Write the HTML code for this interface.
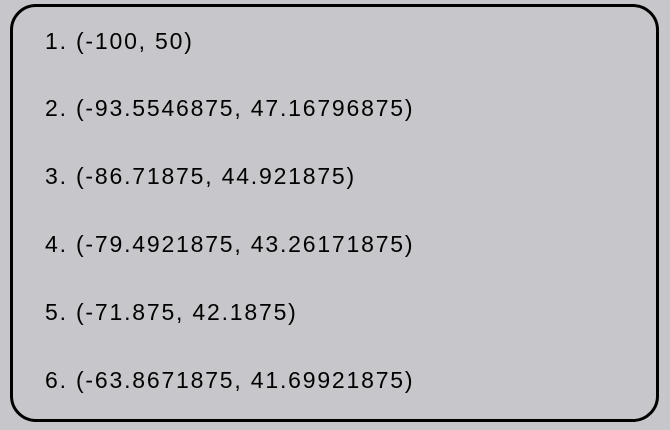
<!DOCTYPE html>
<html><head><style>
html,body{margin:0;padding:0;background:#c7c7cb;width:670px;height:430px;overflow:hidden}
.box{position:absolute;left:10px;top:4px;width:643px;height:412px;border:3px solid #000;border-radius:26px}
.l{position:absolute;left:45px;font:23px "Liberation Sans",sans-serif;letter-spacing:1.8px;color:#000;line-height:26px;white-space:nowrap}
</style></head><body>
<div class="box"></div>
<div class="l" style="top:28px">1. (-100, 50)</div>
<div class="l" style="top:95px">2. (-93.5546875, 47.16796875)</div>
<div class="l" style="top:163px">3. (-86.71875, 44.921875)</div>
<div class="l" style="top:231px">4. (-79.4921875, 43.26171875)</div>
<div class="l" style="top:299px">5. (-71.875, 42.1875)</div>
<div class="l" style="top:367px">6. (-63.8671875, 41.69921875)</div>
</body></html>
